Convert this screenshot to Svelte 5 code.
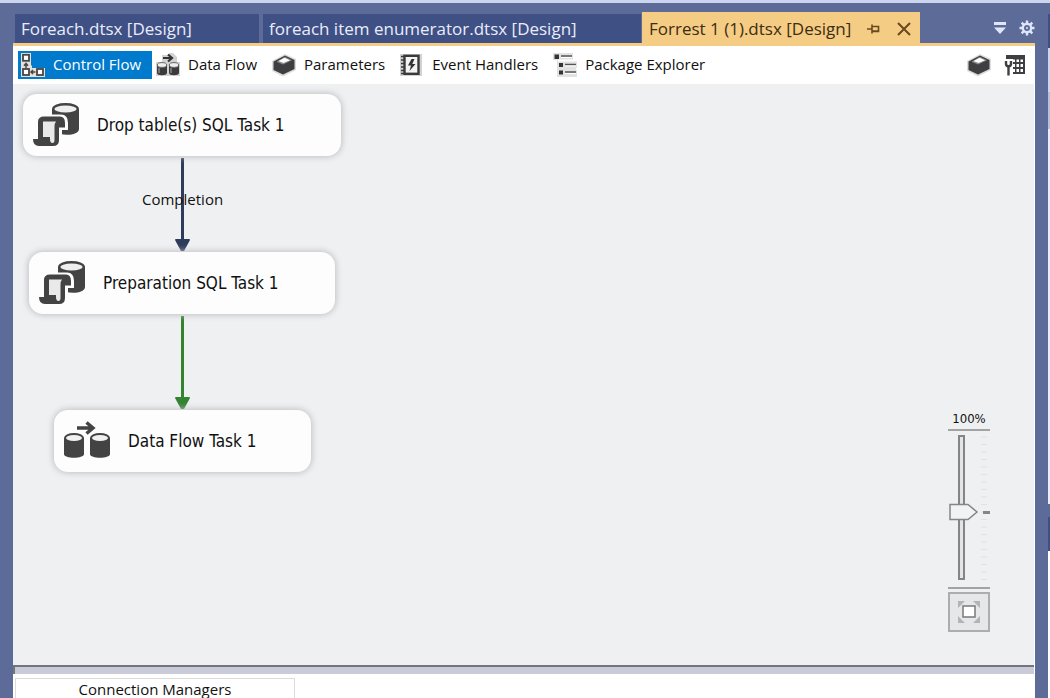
<script>
  let active = $state('Control Flow');
  let zoom = $state(50);

  const documents = [
    { name: 'Foreach.dtsx [Design]', kind: 'first' },
    { name: 'foreach item enumerator.dtsx [Design]', kind: 'second' }
  ];

  const views = ['Control Flow', 'Data Flow', 'Parameters', 'Event Handlers', 'Package Explorer'];

  const nodes = [
    { label: 'Drop table(s) SQL Task 1', icon: 'sql', x: 10, y: 10, w: 318 },
    { label: 'Preparation SQL Task 1', icon: 'sql', x: 16, y: 168, w: 306 },
    { label: 'Data Flow Task 1', icon: 'flow', x: 41, y: 326, w: 257 }
  ];

  const ticks = Array.from({ length: 20 }, (_, i) => 6 + i * 7.5);
</script>

{#snippet box()}
  <svg viewBox="0 0 24 24" width="24" height="24" aria-hidden="true">
    <path d="M13 1 24 6V17L11 23.500 0 18V8Z" fill="#dcdcdc" />
    <path d="M13 2.500 22.500 7V16L11 21.500 1.500 17V8.500Z" fill="#3f3f41" />
    <path d="M13 3.800 20 7.200 11 11.500 4.500 8.700Z" fill="#8b8b8d" />
    <path d="M12.500 4.800 18 7.200 11.500 10 6.500 8Z" fill="#fff" />
  </svg>
{/snippet}

{#snippet viewIcon(name)}
  {#if name === 'Control Flow'}
    <svg viewBox="0 0 24 24" width="24" height="24" aria-hidden="true">
      <path d="M0 0H10V12.500H11V15H24V24H0Z" fill="#e4e0dc" />
      <g fill="#fff" stroke="#4b4540" stroke-width="1.800">
        <rect x="2" y="1.800" width="6" height="6" />
        <rect x="2" y="16" width="6" height="6" />
        <rect x="16" y="16" width="6" height="6" />
      </g>
      <path d="M5 15V10.500M3 12.800 5 10.500 7 12.800M9.500 19H14.500M12 17 10 19 12 21" fill="none" stroke="#4b4540" stroke-width="1.500" />
    </svg>
  {:else if name === 'Data Flow'}
    <svg viewBox="0 0 24 24" width="24" height="24" aria-hidden="true">
      <path d="M6 2H13V0H17L21 4V9H24V23H0V9H6Z" fill="#d3d3d3" />
      <path d="M7 5H15M12 1.500 16 5 12 8.500" fill="none" stroke="#333" stroke-width="2.200" />
      <path d="M1 11.500V20C1 23 11 23 11 20V11.500ZM13 11.500V20C13 23 23 23 23 20V11.500Z" fill="#3b3b3b" />
      <g fill="#eee" stroke="#666" stroke-width="1">
        <ellipse cx="6" cy="12" rx="4.700" ry="2.400" />
        <ellipse cx="18" cy="12" rx="4.700" ry="2.400" />
      </g>
      <path d="M3 15V20M15 15V20" stroke="#888" stroke-width="1.500" />
    </svg>
  {:else if name === 'Parameters'}
    {@render box()}
  {:else if name === 'Event Handlers'}
    <svg viewBox="0 0 24 24" width="24" height="24" aria-hidden="true">
      <rect x="0" y="1" width="22" height="22" fill="#d2d2d2" />
      <rect x="4.500" y="2.800" width="14" height="18" fill="#f3f3f3" stroke="#3a3a3a" stroke-width="2.400" />
      <path d="M1 3.500H4M1 7H4M1 10.500H4M1 14H4M1 17.500H4M1 20.500H4" stroke="#3a3a3a" stroke-width="1.600" />
      <path d="M11.500 6 8 12.500H11L9.500 18 15.500 11H12.300L14.500 6Z" fill="#333" />
    </svg>
  {:else}
    <svg viewBox="0 0 24 24" width="24" height="24" aria-hidden="true">
      <path d="M0 0H20V6.500H5V8.500H24V15H23V17H24V24H4V7H0Z" fill="#e2e2e2" />
      <path d="M1.500 1.500H6V6H1.500ZM6 10H10V14H6ZM6 17.500H10V21.500H6Z" fill="#333" />
      <path d="M8 3H19M12 11.500H23M12 19H23" stroke="#555" stroke-width="1.600" />
      <path d="M8 4.500H19M12 13H23M12 20.500H23" stroke="#fff" stroke-width="1.200" />
    </svg>
  {/if}
{/snippet}

{#snippet taskIcon(kind)}
  {#if kind === 'sql'}
    <svg viewBox="0 0 46 46" width="46" height="46" aria-hidden="true">
      <path d="M19 7V27H27V32C36 34 46 32 46 27V7Z" fill="#434343" />
      <ellipse cx="32.500" cy="7" rx="12.300" ry="4.800" fill="#efefef" stroke="#434343" stroke-width="2.400" />
      <path d="M6 36V20Q6 14.500 12 14.500H28Q33 14.500 33 21V26H27V38Q27 44 21 44H6Q0 44 0 37H6Z" fill="#434343" stroke="#fdfdfe" stroke-width="4" />
      <path d="M5 37V20Q5 14.500 11 14.500H27Q32 14.500 32 21V25.500H26V38Q26 44 20 44H6Q0 44 0 37Z" fill="#434343" />
      <path d="M10 35V19.500H23Q21.500 21 21.500 25V38Q21.500 41 19.500 41Q17 41 17 37V35Z" fill="#e9e9ea" />
    </svg>
  {:else}
    <svg viewBox="0 0 46 46" width="46" height="46" aria-hidden="true">
      <path d="M13 10H28M22.500 4.500 29 10 22.500 15.500" fill="none" stroke="#434343" stroke-width="3.400" />
      <path d="M0 20V36C0 41 20 41 20 36V20ZM26 20V36C26 41 46 41 46 36V20Z" fill="#434343" />
      <g fill="#f0f0f0" stroke="#434343" stroke-width="2">
        <ellipse cx="10" cy="20" rx="9" ry="4" />
        <ellipse cx="36" cy="20" rx="9" ry="4" />
      </g>
    </svg>
  {/if}
{/snippet}

<div class="window">
  <div class="workspace">
    <header class="tabs">
      {#each documents as doc}
        <button class="tab {doc.kind}">{doc.name}</button>
      {/each}
      <div class="tab current">
        <span>Forrest 1 (1).dtsx [Design]</span>
        <button class="glyph" aria-label="Pin tab">
          <svg viewBox="0 0 14 12" width="14" height="12" aria-hidden="true">
            <path d="M0 6H5M5 1.500V10.500M5 3.500H11.500V8.500H5M5 8H11.500" fill="none" stroke="#69491d" stroke-width="1.600" />
          </svg>
        </button>
        <button class="glyph" aria-label="Close tab">
          <svg viewBox="0 0 14 14" width="14" height="14" aria-hidden="true">
            <path d="M1 1 13 13M13 1 1 13" fill="none" stroke="#69491d" stroke-width="2" />
          </svg>
        </button>
      </div>
      <div class="tab-tools">
        <button class="glyph" aria-label="Open documents">
          <svg viewBox="0 0 12 12" width="12" height="12" aria-hidden="true">
            <path d="M0 0H12V3H0ZM0 5.500H12L6 12Z" fill="#dfe6fb" />
          </svg>
        </button>
        <button class="glyph" aria-label="Settings">
          <svg viewBox="0 0 16 16" width="16" height="16" aria-hidden="true">
            <circle cx="8" cy="8" r="4.200" fill="none" stroke="#dfe6fb" stroke-width="2.400" />
            <path d="M8 0.500V3.500M8 12.500V15.500M0.500 8H3.500M12.500 8H15.500M2.700 2.700 4.800 4.800M11.200 11.200 13.300 13.300M13.300 2.700 11.200 4.800M4.800 11.200 2.700 13.300" stroke="#dfe6fb" stroke-width="2.400" />
            <circle cx="8" cy="8" r="1" fill="#dfe6fb" />
          </svg>
        </button>
      </div>
    </header>

    <main class="designer">
      <nav class="toolbar">
        {#each views as view}
          <button class="view" class:selected={active === view} onclick={() => (active = view)}>
            {@render viewIcon(view)}
            <span>{view}</span>
          </button>
        {/each}
        <div class="toolbar-end">
          <button class="glyph" aria-label="Variables">{@render box()}</button>
          <button class="glyph" aria-label="Properties">
            <svg viewBox="0 0 22 22" width="22" height="22" aria-hidden="true">
              <path d="M2 1H21V20H9V5H2Z" fill="#3f3f41" />
              <path d="M8 5.500H11V8H8ZM12.500 5.500H15V8H12.500ZM16.500 5.500H19V8H16.500ZM8 10H11V13H8ZM12.500 10H15V13H12.500ZM16.500 10H19V13H16.500ZM8 15H11V18H8ZM12.500 15H15V18H12.500ZM16.500 15H19V18H16.500Z" fill="#fff" />
              <path d="M2 7V10Q2 12 4.500 12.500Q7 12 7 10V7M4.500 12V21.500" fill="none" stroke="#3f3f41" stroke-width="2.400" />
            </svg>
          </button>
        </div>
      </nav>

      <section class="canvas" aria-label="Control flow diagram">
        <svg class="links" viewBox="0 0 340 400" width="340" height="400" aria-hidden="true">
          <path d="M169.500 74V158" stroke="#2f3b5c" stroke-width="3" />
          <path d="M162 156Q162 155 163 155H176Q177 155 177 156L171 167H168Z" fill="#2f3b5c" />
          <path d="M169.500 232V316" stroke="#348331" stroke-width="3" />
          <path d="M162 314Q162 313 163 313H176Q177 313 177 314L171 325H168Z" fill="#348331" />
        </svg>
        <span class="link-label">Completion</span>
        {#each nodes as node}
          <div class="node" style="left:{node.x}px;top:{node.y}px;width:{node.w}px">
            {@render taskIcon(node.icon)}
            <span>{node.label}</span>
          </div>
        {/each}

        <div class="zoom">
          <label for="zoom-level">100%</label>
          <div class="scale">
            <svg viewBox="0 0 42 156" width="42" height="156" aria-hidden="true">
              <rect x="11" y="5" width="5" height="143" fill="#e4e4e6" stroke="#858585" stroke-width="2" />
              {#each ticks as y}
                <path d="M33 {y}H39" stroke="#e0e1e3" stroke-width="1" />
              {/each}
              <path d="M35 81.500H42" stroke="#858585" stroke-width="3" />
              <path
                d="M2 73.500H20L29 81 20 88.500H2Z"
                transform="translate(0 {(50 - zoom) * 1.3})"
                fill="#f3f3f5"
                stroke="#858585"
                stroke-width="1.500"
              />
            </svg>
            <input id="zoom-level" type="range" min="0" max="100" bind:value={zoom} />
          </div>
          <button class="fit" aria-label="Zoom to fit">
            <svg viewBox="0 0 24 24" width="24" height="24" aria-hidden="true">
              <path d="M1 1H8L1 8ZM23 1V8L16 1ZM1 23V16L8 23ZM23 23H16L23 16Z" fill="#b3b4b6" />
              <rect x="6" y="6" width="12" height="11" fill="#fff" stroke="#808080" stroke-width="1.600" />
            </svg>
          </button>
        </div>
      </section>

      <div class="splitter"></div>
      <footer class="panel">
        <button class="panel-tab">Connection Managers</button>
      </footer>
    </main>
  </div>
  <aside class="dock" aria-hidden="true">
    <i class="dock-title"></i>
    <i class="dock-bar"></i>
    <i class="dock-search"></i>
    <i class="dock-list"></i>
    <i class="dock-gap"></i>
    <i class="dock-title"></i>
    <i class="dock-body"></i>
  </aside>
</div>

<style>
  :global(body) {
    margin: 0;
    background: #5d6b99;
  }

  .window {
    display: flex;
    min-height: 100vh;
    box-sizing: border-box;
    border-top: 3px solid #ccd5f0;
    overflow: hidden;
    font-family: 'Open Sans', 'Noto Sans', sans-serif;
    font-size: 15px;
    color: #111;
  }

  .workspace {
    flex: 1;
    display: flex;
    flex-direction: column;
    min-width: 0;
    padding: 9px 13px 0;
  }

  button {
    font: inherit;
    color: inherit;
    margin: 0;
    padding: 0;
    border: 0;
    background: none;
    cursor: pointer;
  }

  svg {
    display: block;
    flex: none;
  }

  .tabs {
    display: flex;
    align-items: flex-end;
    height: 31px;
    padding-left: 2px;
    font-size: 17px;
    white-space: nowrap;
  }

  .tab {
    box-sizing: border-box;
    height: 29px;
    padding: 0 6px;
    background: #3f5085;
    color: #e9edf9;
    text-align: left;
    line-height: 28px;
  }

  .first {
    width: 244px;
    margin-right: 4px;
  }

  .second {
    width: 378px;
    margin-right: 1px;
  }

  .current {
    display: flex;
    align-items: center;
    height: 31px;
    padding: 3px 9px 0 7px;
    background: #f5cc84;
    color: #3d2d12;
  }

  .current .glyph {
    margin-left: 16px;
  }

  .tab-tools {
    display: flex;
    align-items: center;
    gap: 13px;
    height: 31px;
    margin-left: auto;
  }

  .designer {
    flex: 1;
    display: flex;
    flex-direction: column;
    border-top: 3px solid #f5cc84;
    background: #fff;
  }

  .toolbar {
    display: flex;
    align-items: center;
    gap: 1px;
    height: 38px;
    padding: 0 9px 0 5px;
    white-space: nowrap;
  }

  .view {
    display: flex;
    align-items: center;
    gap: 8px;
    height: 28px;
    padding: 0 11px 0 3px;
  }

  .view span {
    padding-bottom: 3px;
  }

  .selected {
    background: #007acc;
    color: #fff;
  }

  .toolbar-end {
    display: flex;
    align-items: center;
    gap: 13px;
    margin-left: auto;
  }

  .canvas {
    position: relative;
    flex: 1;
    min-height: 480px;
    margin-right: 1px;
    background: #eef0f2;
  }

  .links {
    position: absolute;
    left: 0;
    top: 0;
  }

  .link-label {
    position: absolute;
    left: 129px;
    top: 105px;
    line-height: 20px;
  }

  .node {
    position: absolute;
    display: flex;
    align-items: center;
    gap: 18px;
    box-sizing: border-box;
    height: 62px;
    padding: 0 10px;
    border-radius: 14px;
    background: #fdfdfe;
    box-shadow: 0 0 6px 1px #c0c1c4;
    font-family: 'DejaVu Sans Condensed', 'DejaVu Sans', sans-serif;
    font-size: 17px;
    white-space: nowrap;
  }

  .zoom {
    position: absolute;
    right: 44px;
    bottom: 33px;
    width: 42px;
    font-family: 'DejaVu Sans Condensed', 'DejaVu Sans', sans-serif;
    font-size: 13px;
  }

  .zoom label {
    display: block;
    height: 20px;
    line-height: 20px;
    text-align: center;
  }

  .scale {
    position: relative;
    border: solid #a3a3a3;
    border-width: 2px 0;
  }

  .scale input {
    position: absolute;
    inset: 0;
    width: 100%;
    height: 100%;
    margin: 0;
    opacity: 0;
    writing-mode: vertical-lr;
    direction: rtl;
  }

  .fit {
    display: grid;
    place-items: center;
    box-sizing: border-box;
    width: 42px;
    height: 40px;
    margin-top: 3px;
    border: 2px solid #adadad;
    background: #e6e7e9;
  }

  .splitter {
    box-sizing: border-box;
    height: 9px;
    margin-right: 1px;
    border-top: 2px solid #74757a;
    border-left: 2px solid #74757a;
    background: #c9cbd8;
  }

  .panel {
    padding: 4px 2px 0;
  }

  .panel-tab {
    display: block;
    box-sizing: border-box;
    width: 280px;
    height: 20px;
    border: 1px solid #dcdcdc;
    border-bottom: 0;
    line-height: 20px;
  }

  .dock {
    display: flex;
    flex-direction: column;
    width: 2px;
    padding-top: 11px;
    box-sizing: border-box;
  }

  .dock-title {
    height: 34px;
    background: #3f5085;
  }

  .dock-bar {
    height: 44px;
    background: #ccd5f0;
  }

  .dock-search {
    height: 37px;
    background: #b9c0da;
  }

  .dock-list {
    flex: 375;
    background: #e9edfb;
  }

  .dock-gap {
    height: 13px;
  }

  .dock-body {
    flex: 147;
    background: #fff;
  }
</style>
